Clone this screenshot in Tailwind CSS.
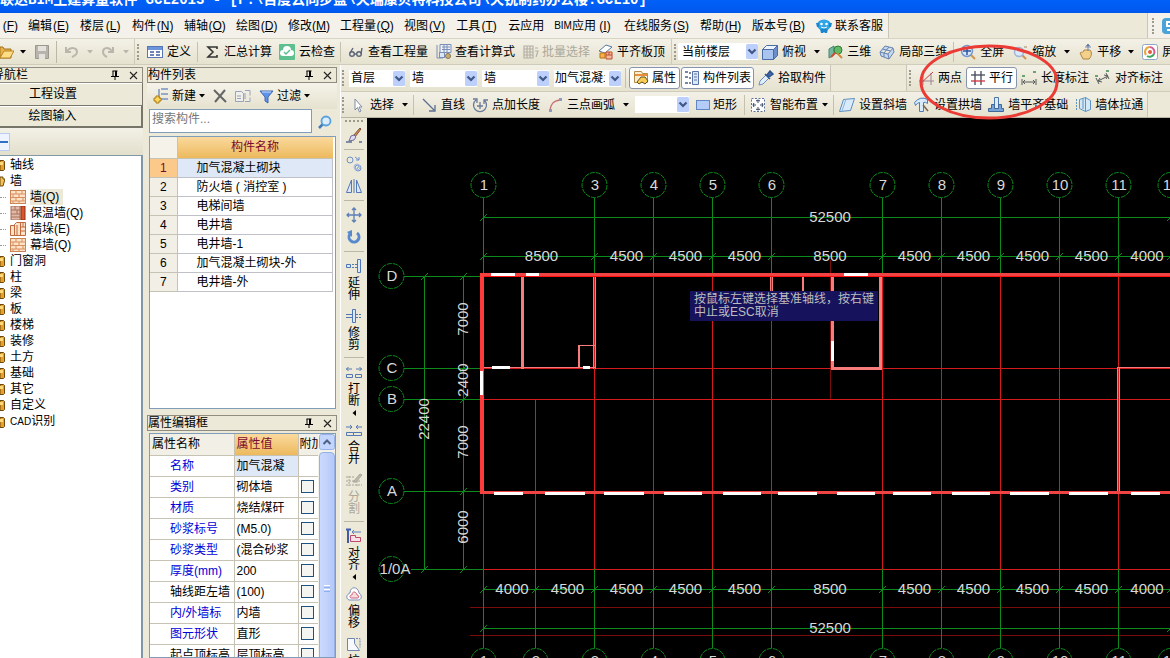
<!DOCTYPE html>
<html lang="zh-CN">
<head>
  <meta charset="UTF-8" />
  <meta name="viewport" content="width=device-width, initial-scale=1.0" />
  <title>广联达BIM土建算量软件 GCL2013</title>
  <script src="https://cdn.jsdelivr.net/npm/@tailwindcss/browser@4"></script>
</head>
<body class="h-screen overflow-hidden flex flex-col bg-[#ece9d8] text-black text-xs leading-4 whitespace-nowrap font-['Liberation_Sans','Noto_Sans_CJK_SC',sans-serif]">

  <!-- shared icons -->
  <svg class="hidden">
    <symbol id="down" viewBox="0 0 6 4"><path d="M0 0h6L3 3.5z" /></symbol>
    <symbol id="left" viewBox="0 0 4 6"><path d="M4 0v6L.5 3z" /></symbol>
    <symbol id="combo" viewBox="0 0 12 15">
      <rect width="12" height="15" rx="1.5" fill="#bdd0fb" />
      <path d="M2.5 5.5 6 9l3.500-3.500" fill="none" stroke="#3f5787" stroke-width="2.200" />
    </symbol>
    <symbol id="pin" viewBox="0 0 8 10"><path d="M1.500 1h5M2 1v5M5.500 1v5M4.500 1v5M0 6.500h8M4 7v3" fill="none" stroke="#000" /></symbol>
    <symbol id="close" viewBox="0 0 9 9"><path d="m1 1 7 7M8 1 1 8" stroke="#222" stroke-width="1.100" /></symbol>
    <symbol id="bricks" viewBox="0 0 16 14">
      <rect x=".5" y=".5" width="15" height="13" fill="#fce3c8" stroke="#c98352" />
      <path d="M0 4h16M0 7.500h16M0 11h16M6 0v4M12 0v4M3 4v3.500M9 4v3.500M6 7.500V11M13 7.500V11M3 11v3M9 11v3" stroke="#d78d5d" />
    </symbol>
    <symbol id="folder" viewBox="0 0 5 12"><path d="M0 1.500h3.500l1 1v8l-1 1H0z" fill="#e9a02a" stroke="#6d4a0e" /><path d="M0 3h3v3H0z" fill="#ffd878" /></symbol>
  </svg>

  <header class="h-[13px] shrink-0 overflow-hidden bg-linear-to-b from-[#0060f8] to-[#0058ee] text-white">
    <h1 class="-mt-2 text-sm leading-4 font-bold font-['Liberation_Mono','Noto_Sans_CJK_SC',monospace]">联达BIM土建算量软件 GCL2013 - [F:\百度云同步盘\天瑞康贝特科技公司\天锐制药办公楼.GCL10]</h1>
  </header>

  <!-- menu -->
  <div class="h-[26px] shrink-0 flex items-center border-b border-[#d8d4c2]">
    <nav class="h-full flex items-center gap-[10px] pr-[5px] bg-[#f3f1e9] border-r border-[#c9c6b8]">
      <button class="w-[18px] text-right">(<u>F</u>)</button>
      <button class="flex">编辑<span class="w-[18px]">(<u>E</u>)</span></button>
      <button class="flex">楼层<span class="w-[18px]">(<u>L</u>)</span></button>
      <button class="flex">构件<span class="w-[18px]">(<u>N</u>)</span></button>
      <button class="flex">辅轴<span class="w-[18px]">(<u>O</u>)</span></button>
      <button class="flex">绘图<span class="w-[18px]">(<u>D</u>)</span></button>
      <button class="flex">修改<span class="w-[18px]">(<u>M</u>)</span></button>
      <button class="flex">工程量<span class="w-[18px]">(<u>Q</u>)</span></button>
      <button class="flex">视图<span class="w-[18px]">(<u>V</u>)</span></button>
      <button class="flex">工具<span class="w-[18px]">(<u>T</u>)</span></button>
      <button>云应用</button>
      <button class="flex"><span class="text-[10px]">BIM</span>应用<span class="w-[18px]">(<u>I</u>)</span></button>
      <button class="flex">在线服务<span class="w-[18px]">(<u>S</u>)</span></button>
      <button class="flex">帮助<span class="w-[18px]">(<u>H</u>)</span></button>
      <button class="flex">版本号<span class="w-[18px]">(<u>B</u>)</span></button>
      <button class="flex items-center gap-[3px]">
        <svg class="size-4" viewBox="0 0 16 16"><ellipse cx="8" cy="7" rx="7" ry="5.500" fill="#2fa4e6" /><path d="M0 5h3v4H1zM16 5h-3v4h2zM4 11h8l-1 4H9l-1-1-1 1H5z" fill="#1b86cc" /><circle cx="5.500" cy="6" r="1.300" fill="#fff" /><circle cx="10.500" cy="6" r="1.300" fill="#fff" /><path d="M5 9q3 2 6 0" stroke="#fff" fill="none" /></svg>
        联系客服
      </button>
    </nav>
    <div class="ml-auto h-full flex items-center gap-2 pl-1 bg-[#f3f1e9] border-l border-[#c9c6b8] overflow-hidden">
      <i class="h-4 border-l-2 border-dotted border-[#9d9a8c]"></i>
      <svg class="w-2 h-4" viewBox="0 0 8 16"><rect width="16" height="16" rx="4" fill="#4aa3d8" /><path d="M9 4H5v4h4M9 12H5" stroke="#fff" stroke-width="2" fill="none" /></svg>
    </div>
  </div>

  <!-- main toolbar -->
  <div class="h-[26px] shrink-0 flex items-center bg-linear-to-b from-[#f3f1e7] to-[#e6e2cf] border-b border-[#d0ccba] overflow-hidden *:shrink-0">
    <button class="flex items-center gap-[6px]" aria-label="打开">
      <svg class="w-[14px] h-4" viewBox="0 0 14 16"><path d="M0 3h3l1 2h7v9H0z" fill="#e9b34a" stroke="#a5731c" /><path d="m0 14 4-7h10l-4 7z" fill="#ffdd85" stroke="#b68426" /></svg>
      <svg class="w-[6px] h-1"><use href="#down" /></svg>
    </button>
    <button class="ml-[9px]" aria-label="保存"><svg class="size-[14px]" viewBox="0 0 14 14"><path d="M.5.5h13v13H.5z" fill="#b6b4ac" stroke="#9a988f" /><path d="M3 1h8v5H3zM4 9h6v5H4z" fill="#e4e2da" /></svg></button>
    <i class="ml-[7px] w-px h-[22px] bg-[#bcb8a6]"></i>
    <button class="ml-2 flex items-center gap-2" aria-label="撤销">
      <svg class="w-[14px] h-3" viewBox="0 0 14 12" fill="none" stroke="#b9b6ab" stroke-width="2"><path d="M1 1v5h5M2 5c4-5 10-3 10 1 0 3-3 4-5 5" /></svg>
      <svg class="w-[6px] h-1 fill-[#b9b6ab]"><use href="#down" /></svg>
    </button>
    <button class="ml-2 flex items-center gap-2" aria-label="恢复">
      <svg class="w-[14px] h-3" viewBox="0 0 14 12" fill="none" stroke="#b9b6ab" stroke-width="2"><path d="M12 1v5H7M11 5C7 0 2 2 2 6c0 3 2 4 4 5" /></svg>
      <svg class="w-[6px] h-1 fill-[#b9b6ab]"><use href="#down" /></svg>
    </button>
    <i class="ml-[5px] h-full w-px bg-[#cfcbb8]"></i>
    <i class="ml-[2px] mr-1 h-4 border-l-2 border-dotted border-[#9d9a8c]"></i>
    <button class="flex items-center gap-1 px-1">
      <svg class="size-4" viewBox="0 0 16 16"><rect x=".5" y="2.500" width="15" height="11" fill="#fff" stroke="#5577b5" /><path d="M1 3h14v3H1z" fill="#6d95dc" /><path d="M3 8h4M3 11h4M9 8h4M9 11h4" stroke="#3c5d9e" stroke-width="1.500" /></svg>
      定义
    </button>
    <i class="mx-[2px] w-px h-5 bg-[#c5c1af]"></i>
    <button class="flex items-center gap-1 px-1">
      <svg class="size-4" viewBox="0 0 16 16"><path d="M13 5V3H4l5 5-5 5h9v-2" fill="none" stroke="#333" stroke-width="1.600" /></svg>
      汇总计算
    </button>
    <button class="flex items-center gap-1 px-[3px]">
      <svg class="size-4" viewBox="0 0 16 16"><rect width="16" height="16" rx="1" fill="#5ec08e" /><path d="M4 12a3 3 0 0 1 0-6 4 4 0 0 1 8 0 3 3 0 0 1 0 6z" fill="#fff" /><path d="m5 8 2 2 4-4" fill="none" stroke="#5ec08e" stroke-width="1.500" /></svg>
      云检查
    </button>
    <i class="mx-[2px] w-px h-5 bg-[#c5c1af]"></i>
    <button class="flex items-center gap-1 pl-[5px] pr-1">
      <svg class="size-4" viewBox="0 0 16 16" fill="none" stroke="#5c6678" stroke-width="1.400"><circle cx="4" cy="10" r="2.300" /><circle cx="11" cy="10" r="2.300" /><path d="M2 9 5 4M6 10h3M13 10l1-6" /></svg>
      查看工程量
    </button>
    <button class="flex items-center gap-[3px] px-1">
      <svg class="size-4" viewBox="0 0 16 16"><path d="M4 .5h11v8H4z" fill="#eef3fb" stroke="#7b8fb5" /><path d="M6 3h8M6 5.500h8M8 1v7M11 1v7" stroke="#7b8fb5" /><path d="M1 1v13h6" stroke="#7b8fb5" fill="none" /><rect x="3.500" y="8.500" width="5" height="5" fill="#dae5f8" stroke="#7b8fb5" /><circle cx="12" cy="12" r="2.500" fill="#cfae6a" stroke="#7b7463" /></svg>
      查看计算式
    </button>
    <button class="flex items-center gap-[3px] px-1 text-[#aca899]" disabled>
      <svg class="size-4" viewBox="0 0 16 16" fill="none" stroke="#b3b0a4" stroke-width="1.200"><path d="M1 2h9v12H1zM1 5h9M1 8h9M1 11h9M4 2v12M7 2v12M12 4h3M12 7h3l-2 6" /></svg>
      批量选择
    </button>
    <button class="flex items-center gap-[3px] px-1">
      <svg class="size-4" viewBox="0 0 16 16"><path d="M1 7 8 1l6 2-7 6z" fill="#fff" stroke="#5577a5" /><path d="M2 9h5v5H2z" fill="#f7b04b" stroke="#b87217" /><path d="M8 8h6v7H8zM8 11h6M11 8v3" fill="#f2b99d" stroke="#bb4e2c" /></svg>
      平齐板顶
    </button>
    <i class="ml-[2px] h-full w-px bg-[#cfcbb8]"></i>
    <i class="mx-[2px] h-4 border-l-2 border-dotted border-[#9d9a8c]"></i>
    <label class="relative w-[80px] h-[17px] bg-white">
      <select aria-label="楼层范围" class="appearance-none w-full h-full pl-1 leading-4"><option>当前楼层</option></select>
      <svg class="absolute right-0 top-px w-3 h-[15px] pointer-events-none"><use href="#combo" /></svg>
    </label>
    <button class="flex items-center gap-1 px-1">
      <svg class="size-4" viewBox="0 0 16 16" stroke="#4b6da5"><path d="m.5 5.500 4-4h11l-4 4z" fill="#eef4ff" /><path d="M.5 5.500h11v10H.5z" fill="#a9c4ee" /><path d="m11.500 5.500 4-4v10l-4 4z" fill="#6b8fca" /></svg>
      俯视
      <svg class="ml-1 w-[6px] h-1"><use href="#down" /></svg>
    </button>
    <button class="flex items-center gap-[3px] px-1">
      <svg class="size-4" viewBox="0 0 16 16"><path d="m1 5 5-3v9l-5 3z" fill="#74b8a4" stroke="#408774" /><circle cx="10" cy="6" r="4" fill="#62ba65" stroke="#347b3d" /><path d="m9 9 5 5" stroke="#cf8b3c" stroke-width="2" /><path d="m3 13 4-4" stroke="#d24b36" stroke-width="2" /></svg>
      三维
    </button>
    <button class="flex items-center gap-1 px-1">
      <svg class="size-4" viewBox="0 0 16 16" fill="#c5d8f2" stroke="#6683ae"><path d="m1 8 5-6 8 2 1 4-5 7-8-3zM1 8l8 2 5-6M9 10l1 5M3.500 5l8 2M5 9l5-6M5 9v4" /></svg>
      局部三维
    </button>
    <i class="mx-[2px] w-px h-5 bg-[#c5c1af]"></i>
    <button class="flex items-center gap-1 px-1">
      <svg class="size-4" viewBox="0 0 16 16"><path d="m11 11 4 4" stroke="#cf9450" stroke-width="2" /><circle cx="7" cy="7" r="5.500" fill="#dce9fb" stroke="#7896c8" stroke-width="1.500" /><path d="M3 7h8M7 3v8" stroke="#2e559e" stroke-width="1.500" /></svg>
      全屏
    </button>
    <button class="flex items-center gap-1 px-1">
      <svg class="size-4" viewBox="0 0 16 16"><path d="m10 11 4 4" stroke="#cf9450" stroke-width="2" /><circle cx="7" cy="8" r="4.500" fill="#dce9fb" stroke="#9fb4d8" stroke-width="1.500" /><path d="M12 3h3" stroke="#9b8a6d" /></svg>
      缩放
      <svg class="ml-1 w-[6px] h-1"><use href="#down" /></svg>
    </button>
    <button class="flex items-center gap-[3px] px-1">
      <svg class="size-4" viewBox="0 0 16 16"><path d="M2 9c2-2 3 1 4-3h6c2 2 2 6-1 9H5z" fill="#f4d088" stroke="#ad8444" /><path d="M10 0v7M7 3h6M10 0 8.500 2h3z" stroke="#748bb2" /></svg>
      平移
      <svg class="ml-1 w-[6px] h-1"><use href="#down" /></svg>
    </button>
    <button class="flex items-center gap-1 px-1">
      <svg class="size-4" viewBox="0 0 16 16" fill="none"><rect x=".5" y=".5" width="15" height="15" rx="2" fill="#fff" stroke="#8da6cb" /><path d="M4 11a5 5 0 0 1 4-8" stroke="#e8a83a" stroke-width="2" /><path d="M8 3a5 5 0 0 1 4 7" stroke="#d65b92" stroke-width="2" /><path d="M12 10a5 5 0 0 1-7 2" stroke="#3fa85f" stroke-width="2" /><circle cx="8" cy="8" r="2" fill="#e3603e" /></svg>
      屏幕旋转
    </button>
  </div>

  <div class="flex-1 min-h-0 flex">

    <!-- navigation bar -->
    <aside class="w-[143px] shrink-0 pt-[2px] flex flex-col">
      <div class="h-4 shrink-0 flex items-center border border-l-0 border-[#8f8d80] overflow-hidden">
        <h2 class="-ml-2 mr-auto">导航栏</h2>
        <svg class="w-2 h-[10px]"><use href="#pin" /></svg>
        <svg class="size-[9px] ml-[10px] mr-1"><use href="#close" /></svg>
      </div>
      <button class="h-[23px] shrink-0 pr-9 border-b border-r border-[#77756a] shadow-[inset_0_1px_#fff]">工程设置</button>
      <button class="h-[22px] shrink-0 pr-9 border-b-2 border-r-2 border-[#77756a] shadow-[inset_0_1px_#fff]">绘图输入</button>
      <div class="h-[27px] shrink-0 flex items-center bg-linear-to-b from-[#f3f1e7] to-[#e2dfcc]">
        <svg class="w-[10px] h-[18px]" viewBox="0 0 10 18"><rect x="-5" y=".5" width="14.500" height="17" fill="#eef4ff" stroke="#b9cdf0" /><path d="M0 9h8" stroke="#2f6fc6" stroke-width="2" /></svg>
      </div>
      <ul class="flex-1 pt-px bg-white border-t border-r-2 border-[#8197a5] leading-4">
        <li class="flex items-center gap-[5px]"><svg class="w-[5px] h-3"><use href="#folder" /></svg>轴线</li>
        <li class="flex items-center gap-[5px]"><svg class="w-[5px] h-3" viewBox="0 0 5 12"><path d="M0 2h3v2h2l-2 7H0z" fill="#f4c355" stroke="#6d4a0e" /></svg>墙</li>
        <li class="h-4 flex items-center gap-1"><i class="w-[6px] border-t border-dotted border-[#999]"></i><svg class="w-4 h-[14px]"><use href="#bricks" /></svg><span class="pr-1 bg-[#ece9d8]">墙(Q)</span></li>
        <li class="h-4 flex items-center gap-1"><i class="w-[6px] border-t border-dotted border-[#999]"></i><svg class="w-4 h-[14px]" viewBox="0 0 16 14"><path d="M1 0h9v14H1z" fill="#e1b9a8" stroke="#a8705c" /><path d="M1 4h9M1 8h9M1 11h9M5 0v4M7 4v4" stroke="#a8705c" /><path d="M11 0h4v14h-4z" fill="#d9562f" stroke="#8e3011" /></svg>保温墙(Q)</li>
        <li class="h-4 flex items-center gap-1"><i class="w-[6px] border-t border-dotted border-[#999]"></i><svg class="w-4 h-[14px]" viewBox="0 0 16 14" fill="#fce3c8" stroke="#c0683c"><path d="M.5 3.500h4v10h-4zM4.500 13.500V2.500l2-2h4v13zM7 3v10M10.500 .5h5v13h-5zM10 5h5M10 9h5M13 1v4" /></svg>墙垛(E)</li>
        <li class="h-4 flex items-center gap-1"><i class="w-[6px] border-t border-dotted border-[#999]"></i><svg class="w-4 h-[14px]"><use href="#bricks" /></svg>幕墙(Q)</li>
        <li class="flex items-center gap-[5px]"><svg class="w-[5px] h-3"><use href="#folder" /></svg>门窗洞</li>
        <li class="flex items-center gap-[5px]"><svg class="w-[5px] h-3"><use href="#folder" /></svg>柱</li>
        <li class="flex items-center gap-[5px]"><svg class="w-[5px] h-3"><use href="#folder" /></svg>梁</li>
        <li class="flex items-center gap-[5px]"><svg class="w-[5px] h-3"><use href="#folder" /></svg>板</li>
        <li class="flex items-center gap-[5px]"><svg class="w-[5px] h-3"><use href="#folder" /></svg>楼梯</li>
        <li class="flex items-center gap-[5px]"><svg class="w-[5px] h-3"><use href="#folder" /></svg>装修</li>
        <li class="flex items-center gap-[5px]"><svg class="w-[5px] h-3"><use href="#folder" /></svg>土方</li>
        <li class="flex items-center gap-[5px]"><svg class="w-[5px] h-3"><use href="#folder" /></svg>基础</li>
        <li class="flex items-center gap-[5px]"><svg class="w-[5px] h-3"><use href="#folder" /></svg>其它</li>
        <li class="flex items-center gap-[5px]"><svg class="w-[5px] h-3"><use href="#folder" /></svg>自定义</li>
        <li class="flex items-center gap-[5px]"><svg class="w-[5px] h-3"><use href="#folder" /></svg><span><span class="text-[10px]">CAD</span>识别</span></li>
      </ul>
    </aside>

    <aside class="w-[190px] ml-1 shrink-0 pt-[2px] flex flex-col">
      <!-- component list -->
      <section class="h-[342px] shrink-0 flex flex-col">
        <div class="h-4 shrink-0 flex items-center border border-[#8f8d80]">
          <h2 class="mr-auto">构件列表</h2>
          <svg class="w-2 h-[10px]"><use href="#pin" /></svg>
          <svg class="size-[9px] ml-[10px] mr-1"><use href="#close" /></svg>
        </div>
        <div class="h-[26px] shrink-0 flex items-center pl-[6px] bg-linear-to-b from-[#f5f3ea] to-[#e6e2cf]">
          <button class="flex items-center gap-[3px]">
            <svg class="size-4" viewBox="0 0 16 16"><path d="M8 1h7M8 6h7M8 11h7M6 1v10" stroke="#7b93c0" stroke-width="1.500" fill="none" /><path d="M3 8h3v2h2v3H6v2H3v-2H1v-3h2z" fill="#ffd95c" stroke="#a9791b" /></svg>
            新建
            <svg class="w-[6px] h-1"><use href="#down" /></svg>
          </button>
          <button class="ml-2" aria-label="删除"><svg class="w-[14px] h-[14px]" viewBox="0 0 14 14"><path d="m1 1 12 12M12 1 2 13" stroke="#666" stroke-width="2" /></svg></button>
          <button class="ml-2" aria-label="复制"><svg class="w-4 h-4" viewBox="0 0 16 16" fill="#f0efe9" stroke="#97a3b8"><path d="M.5 3.500h6l2 2v8h-8zM2 8h4M2 10.500h4M10 2.500h5v5M10 13.500h5v-4M10 5v6" /></svg></button>
          <button class="ml-2 flex items-center gap-[3px]">
            <svg class="size-[15px]" viewBox="0 0 15 15"><path d="M1 2h13l-5 6v6l-3-2V8z" fill="#5d93ea" stroke="#3f69b0" /><path d="M3 3h9" stroke="#cbdffc" /></svg>
            过滤
            <svg class="w-[6px] h-1"><use href="#down" /></svg>
          </button>
        </div>
        <div class="h-[25px] shrink-0 flex pl-[2px]">
          <input type="text" aria-label="搜索构件" placeholder="搜索构件..." class="w-[163px] h-[24px] pl-[2px] pb-1 bg-white border border-[#7f9db9] placeholder:text-[#777]" />
          <button class="flex-1 flex items-center justify-center" aria-label="搜索"><svg class="size-[14px]" viewBox="0 0 14 14"><path d="m1 13 4-4" stroke="#4379bb" stroke-width="2.500" /><circle cx="8" cy="6" r="4.500" fill="#d9edfc" stroke="#5aa0dc" stroke-width="1.800" /></svg></button>
        </div>
        <div class="flex-1 mt-[2px] ml-[2px] mr-px pr-[2px] bg-white border border-[#7f9db9]">
          <table class="w-full border-collapse table-fixed">
            <thead>
              <tr class="h-[21px]">
                <th class="w-[27px] bg-[#f4f2e9] border-r border-b border-[#c6c3b5]"></th>
                <th class="bg-linear-to-b from-[#fad99c] to-[#ecb95c] border-b border-[#c6c3b5] font-normal text-[#7b0a2c]">构件名称</th>
              </tr>
            </thead>
            <tbody id="components"></tbody>
          </table>
        </div>
      </section>

      <!-- property editor -->
      <section class="flex-1 min-h-0 mt-[6px] flex flex-col">
        <div class="h-4 shrink-0 flex items-center border border-[#8f8d80]">
          <h2 class="mr-auto">属性编辑框</h2>
          <svg class="w-2 h-[10px]"><use href="#pin" /></svg>
          <svg class="size-[9px] ml-[10px] mr-1"><use href="#close" /></svg>
        </div>
        <div class="flex-1 min-h-0 mt-[2px] ml-[2px] mr-px flex bg-white border border-[#7f9db9] overflow-hidden">
          <div class="flex-1 overflow-hidden">
            <table class="w-full border-collapse table-fixed">
              <thead>
                <tr class="h-[21px] text-left">
                  <th class="w-[84px] pl-[2px] bg-[#f1efe6] border-r border-b border-[#c6c3b5] font-normal">属性名称</th>
                  <th class="w-[64px] pl-[2px] bg-linear-to-b from-[#fad99c] to-[#ecb95c] border-r border-b border-[#c6c3b5] font-normal text-[#7b0a2c]">属性值</th>
                  <th class="pl-px bg-[#f1efe6] border-b border-[#c6c3b5] font-normal overflow-hidden">附加</th>
                </tr>
              </thead>
              <tbody id="properties"></tbody>
            </table>
          </div>
          <div class="w-[17px] shrink-0 flex flex-col items-center gap-[2px] bg-[#f3f3ec]">
            <svg class="size-4 shrink-0" viewBox="0 0 16 16"><rect x=".5" y=".5" width="15" height="15" rx="2" fill="#c3d5fd" stroke="#98b1e4" /><path d="m4.500 10 3.500-3.500 3.500 3.500" fill="none" stroke="#4d6185" stroke-width="2" /></svg>
            <div class="w-4 h-[273px] shrink-0 rounded-sm bg-linear-to-r from-[#cbdaff] to-[#b5c8f8] border border-[#98b1e4] flex flex-col items-center justify-center gap-px">
              <i class="w-[6px] h-px bg-white"></i><i class="w-[6px] h-px bg-[#8cb0f8]"></i><i class="w-[6px] h-px bg-white"></i><i class="w-[6px] h-px bg-[#8cb0f8]"></i>
            </div>
          </div>
        </div>
      </section>
    </aside>

    <main class="flex-1 min-w-0 ml-[3px] flex flex-col border-l border-white">
      <!-- component toolbar -->
      <div class="h-[27px] shrink-0 flex items-center border-b border-[#d0ccba] overflow-hidden">
        <div class="h-full shrink-0 flex items-center pr-1 bg-linear-to-b from-[#f3f1e7] to-[#e6e2cf] border-r border-[#c9c6b8]">
          <i class="ml-px mr-[5px] h-4 border-l-2 border-dotted border-[#9d9a8c]"></i>
          <div class="flex gap-[5px]">
            <label class="relative w-[56px] h-[17px] bg-white"><select aria-label="楼层" class="appearance-none w-full h-full pl-[2px] leading-4"><option>首层</option></select><svg class="absolute right-0 top-px w-3 h-[15px] pointer-events-none"><use href="#combo" /></svg></label>
            <label class="relative w-[67px] h-[17px] bg-white"><select aria-label="构件大类" class="appearance-none w-full h-full pl-[2px] leading-4"><option>墙</option></select><svg class="absolute right-0 top-px w-3 h-[15px] pointer-events-none"><use href="#combo" /></svg></label>
            <label class="relative w-[67px] h-[17px] bg-white"><select aria-label="构件类型" class="appearance-none w-full h-full pl-[2px] leading-4"><option>墙</option></select><svg class="absolute right-0 top-px w-3 h-[15px] pointer-events-none"><use href="#combo" /></svg></label>
            <label class="relative w-[67px] h-[17px] bg-white"><select aria-label="构件" class="appearance-none w-full h-full pl-px pr-4 leading-4"><option>加气混凝土砌块</option></select><svg class="absolute right-0 top-px w-3 h-[15px] pointer-events-none"><use href="#combo" /></svg></label>
          </div>
          <i class="ml-1 mr-[3px] w-px h-5 bg-[#c5c1af]"></i>
          <button class="h-[22px] flex items-center gap-[3px] px-[3px] bg-white border border-[#8794ad] rounded-[3px]">
            <svg class="size-4" viewBox="0 0 16 16"><path d="M1.500 1.500h7l1 2h5v9h-13z" fill="#f7edd0" stroke="#b38b44" /><path d="M2 4h12v2H2z" fill="#e88f3d" /><path d="m4 12 4-5h4l3 4-3 3-3-2-3 2z" fill="#f5cd54" stroke="#655021" /></svg>
            属性
          </button>
          <button class="ml-px h-[22px] flex items-center gap-[3px] px-[2px] bg-white border border-[#8794ad] rounded-[3px]">
            <svg class="w-4 h-4" viewBox="0 0 16 16"><path d="M1 2h3M1 7h3M1 13h3M6 2v2M6 7v2M6 12v2" stroke="#4c5f86" stroke-width="1.500" /><path d="M8.500 1.500h6v13h-6z" fill="#dce8fb" stroke="#5873a6" /><path d="M10 4h3M10 7h3M10 10h3" stroke="#5873a6" /></svg>
            构件列表
          </button>
          <button class="flex items-center gap-1 pl-1">
            <svg class="size-4" viewBox="0 0 16 16"><path d="m1 15 1-4 6-6 3 3-6 6z" fill="#e1eefc" stroke="#6e8fbd" /><path d="m7 4 5 5M9 5l3-4 3 3-4 3z" fill="#4069ae" stroke="#31558f" stroke-width="1.500" /></svg>
            拾取构件
          </button>
        </div>
        <div class="ml-[75px] flex-1 h-full flex items-center bg-linear-to-b from-[#f3f1e7] to-[#e6e2cf] border-l border-[#c9c6b8]">
          <i class="ml-[2px] mr-1 h-4 border-l-2 border-dotted border-[#9d9a8c]"></i>
          <button class="flex items-center gap-[3px] px-1"><svg class="w-4 h-4" viewBox="0 0 16 16" fill="none" stroke="#9d8494"><path d="M4 1v14M0 11h15M12 3v12" /><path d="M1 14 14 2" stroke="#c43d45" /></svg>两点</button>
          <button class="h-[22px] flex items-center gap-[3px] px-[3px] bg-white border border-[#8794ad] rounded-[3px]"><svg class="size-4" viewBox="0 0 16 16"><path d="M5 1v14M11 1v14" stroke="#44495a" stroke-width="1.300" /><path d="M1 5h14" stroke="#44495a" stroke-width="1.300" /><path d="M1 11h14" stroke="#cf3342" stroke-width="1.300" /></svg>平行</button>
          <button class="flex items-center gap-1 px-1"><svg class="size-4" viewBox="0 0 16 16"><path d="M1 9v6M15 9v6M2 12h12M4 10l-2 2 2 2M12 10l2 2-2 2" fill="none" stroke="#555b58" /><path d="M1 6h3M12 2h3" stroke="#69a36f" stroke-width="2" /></svg>长度标注</button>
          <button class="flex items-center gap-1 px-[2px]"><svg class="size-4" viewBox="0 0 16 16"><path d="m1 8 3 6M11 3l3 6M3 11l10-5M5 8l-2 3 4 1M9 5l4 1-2 3" fill="none" stroke="#555b58" /><path d="M0 6h3M11 1h3" stroke="#69a36f" stroke-width="2" /></svg>对齐标注</button>
        </div>
      </div>

      <!-- drawing toolbar -->
      <div class="h-[26px] shrink-0 flex items-center border-b border-[#b7b4a4] overflow-hidden">
        <div class="h-full shrink-0 flex items-center pr-1 bg-linear-to-b from-[#f3f1e7] to-[#e6e2cf] border-r border-[#c9c6b8]">
          <i class="ml-px mr-1 h-4 border-l-2 border-dotted border-[#9d9a8c]"></i>
          <button class="flex items-center gap-1 pl-[2px]"><svg class="size-4" viewBox="0 0 16 16"><path d="M5 2v11l2.500-2.500L9.500 15l1.500-1-2-4h3z" fill="#fff" stroke="#7f8ca8" /></svg>选择<svg class="ml-1 w-[6px] h-1"><use href="#down" /></svg></button>
          <i class="ml-[5px] mr-[3px] w-px h-5 bg-[#c5c1af]"></i>
          <button class="flex items-center gap-1 px-1"><svg class="size-4" viewBox="0 0 16 16"><path d="m2 2 11 11M14 8v6H8" fill="none" stroke="#5b6e90" stroke-width="1.300" /></svg>直线</button>
          <button class="flex items-center gap-1 px-[3px]"><svg class="size-4" viewBox="0 0 16 16" fill="none" stroke="#6a7a98" stroke-width="1.300"><path d="M4 3a6.500 6.500 0 1 0 8 0M12 7V3h4M1 2h4v4M8 5v7M5 9h6" /></svg>点加长度</button>
          <button class="flex items-center gap-1 px-1"><svg class="size-4" viewBox="0 0 16 16"><path d="M3 13C4 7 6 4 13 3" fill="none" stroke="#c77373" stroke-width="1.300" /><path d="M2 12h3v3H2zM12 1h3v3h-3z" fill="#8c9bb9" /></svg>三点画弧<svg class="ml-1 w-[6px] h-1"><use href="#down" /></svg></button>
          <label class="mx-[2px] relative w-[54px] h-[17px] bg-white"><select aria-label="画弧方式" class="appearance-none w-full h-full"><option></option></select><svg class="absolute right-0 top-px w-3 h-[15px] pointer-events-none"><use href="#combo" /></svg></label>
          <button class="flex items-center gap-[2px] px-1"><svg class="size-4" viewBox="0 0 16 16"><rect x="1.500" y="3.500" width="13" height="9" fill="#b4cdf8" stroke="#6286c4" /></svg>矩形</button>
          <i class="mx-[3px] w-px h-5 bg-[#c5c1af]"></i>
          <button class="flex items-center gap-1 px-[2px]"><svg class="size-4" viewBox="0 0 16 16"><rect x="1.500" y="1.500" width="13" height="13" fill="#fff" stroke="#5e7297" stroke-dasharray="2 1.500" /><path d="M8 3v3M8 10v3M3 8h3M10 8h3M6 4l2-1 2 1M6 12l2 1 2-1M4 6 3 8l1 2M12 6l1 2-1 2" fill="none" stroke="#32415e" /></svg>智能布置<svg class="w-[6px] h-1"><use href="#down" /></svg></button>
          <i class="mx-[3px] w-px h-5 bg-[#c5c1af]"></i>
          <button class="flex items-center gap-1 px-[2px]"><svg class="size-4" viewBox="0 0 16 16"><path d="m4.500 2.500 11-1-4 12-11 1z" fill="#d9eafa" stroke="#5c8cc2" /><path d="m7 2-4 12" stroke="#8cb4df" /></svg>设置斜墙</button>
          <button class="ml-[2px] flex items-center gap-1 px-[3px]"><svg class="size-4" viewBox="0 0 16 16"><path d="M.5 5.500q6-7 13-3v4q-2-2-4-1v9h-4v-9q-2 0-4 3z" fill="#d9eafa" stroke="#4d7fb7" /><path d="m9 8 5 6" stroke="#7a6450" stroke-width="1.500" /></svg>设置拱墙</button>
          <button class="flex items-center gap-1 px-[3px]"><svg class="size-4" viewBox="0 0 16 16"><path d="M6.500.5h4v11h-4z" fill="#dceafa" stroke="#4d77ad" /><path d="M.5 11.500h3v-4h3v4h4v-4h3v4h2v3H.5z" fill="#77a3d9" stroke="#41689b" /></svg>墙平齐基础</button>
          <button class="flex items-center gap-1 pl-1"><svg class="size-4" viewBox="0 0 16 16" fill="#d5e8f8" stroke="#5b95bf"><path d="m4.500 2.500 6-2 5 3v9l-5 2-6-3zM10.500 .5v14M8 2v10" /><path d="M1.500 2v11" stroke-dasharray="2 1" /></svg>墙体拉通</button>
        </div>
      </div>

      <div class="flex-1 min-h-0 flex">
        <!-- edit tools -->
        <div class="w-[26px] shrink-0 overflow-hidden flex flex-col items-center">
          <i class="mt-[2px] mb-[5px] w-[18px] shrink-0 border-t-2 border-dotted border-[#9d9a8c]"></i>
          <button class="shrink-0" aria-label="格式刷"><svg class="size-4" viewBox="0 0 16 16"><path d="m7 9 7-8 1 1-6 8z" fill="#d98d4c" stroke="#80523a" /><path d="m3 14 2-5 3-1 2 2-2 3z" fill="#dcdcf0" stroke="#716998" /><path d="M0 15h6M13 15h3" stroke="#596e97" stroke-width="1.500" /></svg></button>
          <i class="my-[6px] w-5 h-px shrink-0 bg-[#bcb8a6]"></i>
          <button class="shrink-0" aria-label="复制"><svg class="size-4" viewBox="0 0 16 16" fill="none" stroke="#6c8fca"><circle cx="4" cy="4" r="3" /><circle cx="12" cy="12" r="3" /><path d="m10 14 4-5M9 1l4 3M13 1v3h-3" /><circle cx="11" cy="11" r="3" stroke="#a3b8de" /></svg></button>
          <button class="mt-[6px] shrink-0" aria-label="镜像"><svg class="size-4" viewBox="0 0 16 16" fill="#d9e8fb" stroke="#5479b7"><path d="M5.500 2v12.500H.5zM10.500 2v12.500h5zM8 1v14" /></svg></button>
          <i class="my-[6px] w-5 h-px shrink-0 bg-[#bcb8a6]"></i>
          <button class="shrink-0" aria-label="移动"><svg class="size-4" viewBox="0 0 16 16"><path d="M8 1v14M1 8h14M6 3l2-2 2 2M6 13l2 2 2-2M3 6 1 8l2 2M13 6l2 2-2 2" fill="none" stroke="#5d7fb8" stroke-width="1.300" /></svg></button>
          <button class="mt-[6px] shrink-0" aria-label="旋转"><svg class="size-4" viewBox="0 0 16 16"><path d="M4 5a5 5 0 1 0 7-1" fill="none" stroke="#5889cf" stroke-width="3" /><path d="M6 1v7L1 3z" fill="#5889cf" /></svg></button>
          <i class="my-[6px] w-5 h-px shrink-0 bg-[#bcb8a6]"></i>
          <button class="w-4 shrink-0 whitespace-normal leading-3"><svg class="size-4 mb-[3px]" viewBox="0 0 16 16" fill="#dce9fb" stroke="#4f76b5"><path d="M11.500 1.500h3v13h-3zM.5 6.500h4v3h-4z" /><path d="M6 6.500h5M6 9.500h5" stroke-dasharray="2 1" /></svg>延伸</button>
          <button class="mt-[7px] w-4 shrink-0 whitespace-normal leading-3"><svg class="size-4 mb-[3px]" viewBox="0 0 16 16" fill="#dce9fb" stroke="#4f76b5"><path d="M6.500 1.500h3v13h-3zM0 6.500h6M0 9.500h6" /><path d="M10 6.500h6M10 9.500h6" stroke-dasharray="2 1" /></svg>修剪</button>
          <i class="my-[6px] w-5 h-px shrink-0 bg-[#bcb8a6]"></i>
          <button class="w-4 shrink-0 whitespace-normal leading-3 flex flex-col items-center"><svg class="size-4 mb-[3px]" viewBox="0 0 16 16" fill="none" stroke="#5478b4"><path d="M0 5h6M10 5h6M2.500 3 .5 5l2 2M13.500 3l2 2-2 2M.5 10.500h6v3h-6zM9.500 10.500h6v3h-6z" /></svg>打断<svg class="mt-[3px] w-1 h-[6px]"><use href="#left" /></svg></button>
          <button class="mt-[6px] w-4 shrink-0 whitespace-normal leading-3"><svg class="size-4 mb-[3px]" viewBox="0 0 16 16" fill="none" stroke="#5478b4"><path d="M0 5h6M10 5h6M4 3l2 2-2 2M12 3l-2 2 2 2M.5 10.500h7v3h-7zM7.500 10.500h8v3h-8z" /></svg>合并</button>
          <button class="mt-[7px] w-4 shrink-0 whitespace-normal leading-3 text-[#aca899]" disabled><svg class="size-4 mb-[3px]" viewBox="0 0 16 16" fill="none" stroke="#a8a598"><path d="M0 5h9M0 9h14M0 13h16M3 4v10M11 9v5" stroke-dasharray="2 1" /><path d="m7 10 7-8 2 1-6 7z" fill="#bdbab0" /></svg>分割</button>
          <i class="my-[6px] w-5 h-px shrink-0 bg-[#bcb8a6]"></i>
          <button class="w-4 shrink-0 whitespace-normal leading-3 flex flex-col items-center"><svg class="size-4 mb-[3px]" viewBox="0 0 16 16" fill="none"><path d="M2 1v14M0 1.500h5" stroke="#3f5ca8" stroke-width="2" /><path d="M15 4H6M8 2 6 4l2 2" stroke="#5c7ebc" /><path d="M4.500 7.500h5v2h5v4h-10z" fill="#f5e0e8" stroke="#be496a" /></svg>对齐<svg class="mt-[3px] w-1 h-[6px]"><use href="#left" /></svg></button>
          <button class="mt-[6px] w-4 shrink-0 whitespace-normal leading-3"><svg class="size-4 mb-[3px]" viewBox="0 0 16 16"><path d="M3 14C-1 12 1 8 4 7c0-7 8-7 9 0 3 2 3 6 0 7z" fill="#fff" stroke="#7b91bd" /><path d="M5 12c-2-1-1-3 1-3 0-4 4-4 5 0 2 0 2 2 1 3z" fill="#f8dce1" stroke="#cf6079" /></svg>偏移</button>
          <button class="mt-[7px] w-4 shrink-0 whitespace-normal leading-3"><svg class="size-4 mb-[3px]" viewBox="0 0 16 16"><path d="M1.500 14.500v-12h7v5l5 7z" fill="#f7f9fc" stroke="#6f87b0" /><path d="M10 2.500h4v9" fill="none" stroke="#6f87b0" stroke-dasharray="2 1" /></svg>拉伸</button>
        </div>

        <!-- floor plan -->
        <div class="relative flex-1 min-w-0 bg-black overflow-hidden">
          <svg id="plan" class="w-full h-full" viewBox="367 118 803 540" preserveAspectRatio="xMinYMin slice" shape-rendering="crispEdges"></svg>
          <div class="absolute left-[323px] top-[173px] w-[188px] px-1 py-[2px] bg-[#17125c] text-[#bdbdbd] leading-[13px]">按鼠标左键选择基准轴线，按右键<br />中止或ESC取消</div>
        </div>
      </div>
    </main>
  </div>

  <!-- hand-drawn marker around the axis tools -->
  <svg class="absolute left-[918px] top-[43px] w-[142px] h-[78px] pointer-events-none" viewBox="0 0 142 78"><ellipse cx="71" cy="39" rx="68" ry="36" fill="none" stroke="#ea3b35" stroke-width="3" /></svg>

  <script>
    // Component list
    const components = ['加气混凝土砌块', '防火墙 ( 消控室 )', '电梯间墙', '电井墙', '电井墙-1', '加气混凝土砌块-外', '电井墙-外'];
    document.getElementById('components').innerHTML = components.map((name, i) => `
      <tr class="h-[19px]">
        <td class="${i === 0 ? 'bg-[#fbc98a] text-[#7b0a2c]' : 'bg-[#f1efe6]'} p-0 text-center border-r border-b border-[#c6c3b5]">${i + 1}</td>
        <td class="${i === 0 ? 'bg-[#dfe8f6]' : ''} p-0 pl-[19px] border-r border-b border-[#c0c0c8]">${name}</td>
      </tr>`).join('');

    // Property grid: name, value, public property
    const properties = [
      ['名称', '加气混凝', true],
      ['类别', '砌体墙', true],
      ['材质', '烧结煤矸', true],
      ['砂浆标号', '(M5.0)', true],
      ['砂浆类型', '(混合砂浆', true],
      ['厚度(mm)', '200', true],
      ['轴线距左墙', '(100)', false],
      ['内/外墙标', '内墙', true],
      ['图元形状', '直形', true],
      ['起点顶标高', '层顶标高', false]
    ];
    document.getElementById('properties').innerHTML = properties.map(([name, value, common], i) => `
      <tr class="h-[21px]">
        <td class="${common ? 'text-[#0000d8]' : ''} p-0 pl-5 border-r border-b border-[#c6c3b5] overflow-hidden">${name}</td>
        <td class="${i === 0 ? 'bg-[#dfe8f6]' : ''} p-0 pl-[2px] border-r border-b border-[#c6c3b5] overflow-hidden">${value}</td>
        <td class="p-0 pl-[2px] border-b border-[#c6c3b5]">${i === 0 ? '' : `<input type="checkbox" aria-label="${name}附加" class="appearance-none block size-[13px] bg-[#f4f4f0] border border-[#1c5180]" />`}</td>
      </tr>`).join('');

    // Floor plan
    const GREEN = '#0c8a1c', RED = '#d41a1a', WALL = '#f04444', PINK = '#f77c7c', DARK = '#7a0c0c';
    const RIGHT = 1170, TOP = 275, BOTTOM = 569;
    const out = [];
    const line = (x1, y1, x2, y2, color, width = 1) => {
      const o = width % 2 ? 0.5 : 0;
      const dx = x1 === x2 ? o : 0, dy = y1 === y2 ? o : 0;
      out.push(`<path d="M${x1 + dx} ${y1 + dy}L${x2 + dx} ${y2 + dy}" stroke="${color}" stroke-width="${width}"/>`);
    };
    const text = (x, y, s, turn) => out.push(`<text x="${x}" y="${y}" dy="5" text-anchor="middle" font-size="15" fill="#d9d9d9"${turn ? ` transform="rotate(-90 ${x} ${y})"` : ''}>${s}</text>`);
    const bubble = (x, y, s) => {
      out.push(`<circle cx="${x + 0.5}" cy="${y}" r="12.500" fill="none" stroke="${GREEN}" shape-rendering="auto" stroke-dasharray="5 1"/>`);
      text(s.length > 2 ? x + 4 : x + 1, y, s);
    };
    const tick = (x, y) => out.push(`<path d="M${x - 3} ${y + 4}L${x + 4} ${y - 3}" stroke="${GREEN}"/>`);

    const axes = [['1', 483], ['2', 535], ['3', 594], ['4', 653], ['5', 712], ['6', 771], ['7', 882], ['8', 941], ['9', 1000], ['10', 1059], ['11', 1118], ['12', 1170]];
    const upper = axes.filter(a => a[0] !== '2');
    const rows = [['D', 276], ['C', 368], ['B', 399], ['A', 491], ['1/0A', 569]];

    for (const y of [607, 635]) line(470, y, RIGHT, y, DARK);
    line(830, 260, 830, 399, DARK);
    for (const y of [368, 399, BOTTOM]) line(483, y, RIGHT, y, RED);
    for (const [name, x] of axes) line(x, name === '2' ? 399 : TOP, x, BOTTOM, RED);

    for (const y of [217, 256, 589, 628]) line(483, y, RIGHT, y, GREEN);
    for (const [name, x] of upper) { bubble(x, 185, name); line(x, 198, x, TOP, GREEN); tick(x, 256); }
    for (const [name, x] of axes) { bubble(x, 661, name); line(x, BOTTOM, x, 648, GREEN); tick(x, 589); }
    for (const y of [217, 628]) { tick(483, y); tick(1170, y); }
    for (const [name, y] of rows) { bubble(391, y, name); line(name === '1/0A' ? 411 : 404, y, 483, y, GREEN); tick(463, y); }
    for (const x of [424, 463]) line(x, 276, x, BOTTOM, GREEN);
    tick(424, 276);
    tick(424, 569);

    [8500, 4500, 4500, 4500, 8500, 4500, 4500, 4500, 4500, 4000].forEach((d, i) => {
      text(i === 9 ? 1147 : i === 4 ? 830 : (upper[i][1] + upper[i + 1][1]) / 2 + 3, 256, d);
    });
    [4000, 4500, 4500, 4500, 4500, 8500, 4500, 4500, 4500, 4500, 4000].forEach((d, i) => {
      text(i === 10 ? 1147 : i === 5 ? 830 : (axes[i][1] + axes[i + 1][1]) / 2 + 3, 589, d);
    });
    text(830, 217, 52500);
    text(830, 628, 52500);
    [[463, 319, 7000], [463, 380, 2400], [463, 442, 7000], [463, 527, 6000], [424, 419, 22400]].forEach(([x, y, d]) => text(x, y, d, true));

    // inner walls
    line(522, 277, 522, 369, PINK, 3);
    line(483, 367, 595, 367, PINK, 1);
    line(593, 277, 593, 369, PINK);
    line(595, 277, 595, 369, PINK);
    line(579, 345, 579, 368, PINK, 2);
    line(578, 345, 595, 345, PINK);
    line(770, 277, 770, 291, PINK);
    line(772, 277, 772, 291, PINK);
    line(803, 277, 803, 291, PINK, 2);
    line(832, 277, 832, 369, PINK, 3);
    line(831, 368, 882, 368, PINK, 3);
    line(880, 277, 880, 369, PINK, 3);
    line(1117, 367, 1117, 491, PINK);
    line(1119, 367, 1119, 491, PINK);
    line(1118, 367, RIGHT, 367, PINK);

    // outer walls
    line(481, 274, RIGHT, 274, WALL, 3);
    line(481, 276, RIGHT, 276, '#ff1010');
    line(482, 273, 482, 494, '#ff3c3c', 4);
    line(481, 492, RIGHT, 492, WALL, 3);

    // openings
    [[491, 515], [526, 539], [844, 868]].forEach(([a, b]) => line(a, 274, b, 274, '#fff', 3));
    [[494, 523], [545, 585], [604, 644], [664, 702], [723, 761], [778, 817], [837, 875], [893, 931], [952, 990], [1010, 1049], [1069, 1108], [1131, 1160]].forEach(([a, b]) => line(a, 493, b, 493, '#fff', 3));
    line(481, 371, 481, 395, '#fff', 3);
    line(492, 367, 510, 367, '#fff', 3);
    line(583, 367, 590, 367, '#fff', 3);
    line(832, 341, 832, 361, '#fff', 3);

    document.getElementById('plan').innerHTML = out.join('');
  </script>
</body>
</html>
